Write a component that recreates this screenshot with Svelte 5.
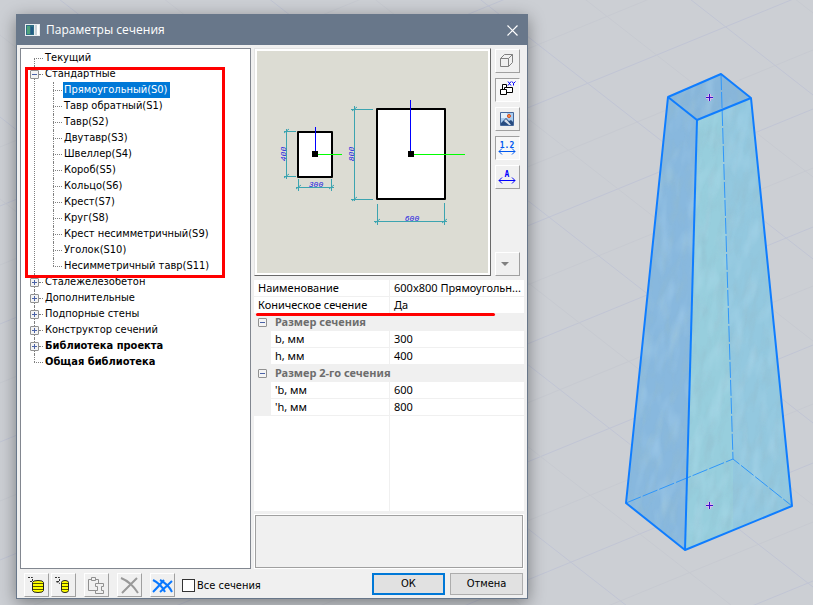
<script>
    let selected = "Прямоугольный(S0)";
    let allSections = false;

    const tree = [
        { label: "Текущий" },
        {
            label: "Стандартные",
            open: true,
            marked: true,
            children: [
                "Прямоугольный(S0)",
                "Тавр обратный(S1)",
                "Тавр(S2)",
                "Двутавр(S3)",
                "Швеллер(S4)",
                "Короб(S5)",
                "Кольцо(S6)",
                "Крест(S7)",
                "Круг(S8)",
                "Крест несимметричный(S9)",
                "Уголок(S10)",
                "Несимметричный тавр(S11)",
            ],
        },
        { label: "Сталежелезобетон", children: [] },
        { label: "Дополнительные", children: [] },
        { label: "Подпорные стены", children: [] },
        { label: "Конструктор сечений", children: [] },
        { label: "Библиотека проекта", children: [], bold: true },
        { label: "Общая библиотека", bold: true },
    ];

    const mainProps = [
        { name: "Наименование", value: "600x800 Прямоугольн..." },
        { name: "Коническое сечение", value: "Да", marked: true },
    ];

    const groups = [
        {
            title: "Размер сечения",
            rows: [
                { name: "b, мм", value: "300" },
                { name: "h, мм", value: "400" },
            ],
        },
        {
            title: "Размер 2-го сечения",
            rows: [
                { name: "'b, мм", value: "600" },
                { name: "'h, мм", value: "800" },
            ],
        },
    ];

    // floor grid: two families of parallel lines, every second one fainter
    const rising = Array.from({ length: 17 }, (_, i) => ({ y: -103 + 59 * i, faint: i % 2 === 0 }));
    const falling = Array.from({ length: 17 }, (_, i) => ({ y: -637 + 82 * i, faint: i % 2 === 0 }));
</script>

<main class="desktop">
    <svg class="scene" viewBox="0 0 813 605" preserveAspectRatio="xMaxYMid slice" aria-hidden="true">
        <defs>
            <filter id="grain" x="0" y="0" width="100%" height="100%">
                <feTurbulence type="fractalNoise" baseFrequency="0.12 0.04" numOctaves="3" seed="4" />
                <feColorMatrix values="0 0 0 0 0.3  0 0 0 0 0.5  0 0 0 0 0.6  1.8 0 0 0 -0.8" />
            </filter>
            <filter id="glow" x="0" y="0" width="100%" height="100%">
                <feTurbulence type="fractalNoise" baseFrequency="0.08 0.03" numOctaves="2" seed="9" />
                <feColorMatrix values="0 0 0 0 0.6  0 0 0 0 0.85  0 0 0 0 1  1.8 0 0 0 -0.8" />
            </filter>
            <clipPath id="solid">
                <path d="M721 74 751 98 792 506 685 550 626 503 668 97Z" />
            </clipPath>
        </defs>

        <g class="floor">
            {#each rising as line}
                <line class:faint={line.faint} x1="0" y1={line.y + 250} x2="813" y2={line.y - 83} />
            {/each}
            {#each falling as line}
                <line class:faint={line.faint} x1="0" y1={line.y - 476} x2="813" y2={line.y + 158} />
            {/each}
        </g>

        <path fill="#88b8de" d="M668 97 697 120 685 550 626 503Z" />
        <path fill="#97cedd" d="M697 120 722 110 733 459 733 530 685 550Z" />
        <path fill="#93c8df" d="M722 110 751 98 792 506 733 530 733 459Z" />
        <path fill="#88b6da" d="M668 97 721 74 751 98 697 120Z" />
        <g clip-path="url(#solid)">
            <g transform="rotate(8 700 300)">
                <rect x="580" y="40" width="250" height="540" filter="url(#grain)" opacity="0.5" />
                <rect x="580" y="40" width="250" height="540" filter="url(#glow)" opacity="0.3" />
            </g>
        </g>
        <g class="hidden-edges">
            <path d="M721 74 733 459" />
            <path d="M626 503 733 459 792 506" />
        </g>
        <g class="edges">
            <path d="M668 97 721 74 751 98 697 120Z" />
            <path d="M668 97 626 503 685 550 792 506 751 98" />
            <path d="M697 120 685 550" />
        </g>
        <path class="mark-halo" d="M709.500 94v7M706 97.500h7M709.500 502v7M706 505.500h7" />
        <path class="mark" d="M709.500 94v7M706 97.500h7M709.500 502v7M706 505.500h7" />
    </svg>

    <div class="dialog" role="dialog" aria-labelledby="dialog-title">
        <header>
            <svg width="15" height="12" viewBox="0 0 15 12" aria-hidden="true">
                <path fill="#e9eef2" d="M0 0h15v12H0z" />
                <path fill="#2f6f86" d="M1 1h8v10H1z" />
                <path fill="#4fa27c" d="M2 2h3v8H2z" />
                <path fill="#235a86" d="M6 3h2v7H6z" />
                <path fill="#c9d3da" d="M10 1h2v10h-2z" />
                <path fill="#fff" d="M12 1h2v10h-2z" />
            </svg>
            <h1 id="dialog-title">Параметры сечения</h1>
            <button class="close" aria-label="Закрыть">
                <svg width="11" height="11" viewBox="0 0 11 11"><path d="M.5.5l10 10M10.500.5l-10 10" stroke="#fff" stroke-width="1.2" /></svg>
            </button>
        </header>

        <div class="columns">
            <nav class="tree">
                <ul>
                    {#each tree as node}
                        <li>
                            <div class="node" class:bold={node.bold}>
                                {#if node.children}
                                    <button class="toggle" class:open={node.open} aria-label={node.label}></button>
                                {/if}
                                <span class="dash"></span>
                                <span class="label">{node.label}</span>
                            </div>
                            {#if node.open}
                                <ul>
                                    {#each node.children as child}
                                        <li>
                                            <div class="node">
                                                <span class="dash"></span>
                                                <button
                                                    class="label"
                                                    class:selected={selected === child}
                                                    on:click={() => (selected = child)}
                                                >{child}</button>
                                            </div>
                                        </li>
                                    {/each}
                                </ul>
                            {/if}
                            {#if node.marked}
                                <span class="frame"></span>
                            {/if}
                        </li>
                    {/each}
                </ul>
            </nav>

            <div class="side">
                <div class="top">
                    <div class="preview">
                        <svg viewBox="257 51 231 222" role="img" aria-label="Эскиз сечения">
                            <g fill="none" stroke="#3ca4b0">
                                <path d="M286.500 129v50M284 131.500h12M284 176.500h12M284 133l5-4M284 178l5-4" />
                                <path d="M296 187.500h38M298.500 179v12M331.500 179v12M296 189l5-4M329 189l5-4" />
                                <path d="M354.500 106v95M351 109.500h22M351 199.500h22M352 111l5-4M352 201l5-4" />
                                <path d="M374 221.500h73M377.500 204v21M444.500 203v22M375 223l5-4M442 223l5-4" />
                            </g>
                            <g fill="#fff" stroke="#000" stroke-width="2" stroke-linejoin="round">
                                <path d="M298 132h34v45h-34z" />
                                <path d="M377 109h68v90h-68z" />
                            </g>
                            <path d="M315.500 127v27M410.500 100v54" stroke="#00f" />
                            <path d="M318 154.500h24M414 154.500h51" stroke="#0f0" />
                            <path d="M312 151h6v6h-6zM408 151h6v6h-6z" />
                            <g class="dims">
                                <text x="316" y="187">300</text>
                                <text x="412" y="221">600</text>
                                <text transform="translate(286 154) rotate(-90)">400</text>
                                <text transform="translate(354 154) rotate(-90)">800</text>
                            </g>
                        </svg>
                    </div>
                    <div class="tools">
                        <button class="tool" aria-label="Объёмный вид">
                            <svg viewBox="0 0 25 24" fill="none" stroke="#808080">
                                <path d="M5.500 9.500h8v8h-8zM5.500 9.500l4-4h8v8l-4 4M13.500 9.500l4-4" />
                            </svg>
                        </button>
                        <button class="tool pressed" aria-label="Оси">
                            <svg viewBox="0 0 25 24" fill="#fff" stroke="#000">
                                <path d="M7.500 6.500h4v6h-4z" />
                                <path d="M9.500 9.500h8v5h-8z" />
                                <path d="M5.500 11.500h6v5h-6z" />
                                <path fill="none" stroke="#00f" d="M13 3.500l3 4M16 3.500l-3 4M17 3.500l1.500 2 2-2M18.500 5.500v2" />
                            </svg>
                        </button>
                        <button class="tool" aria-label="Рисунок">
                            <svg viewBox="0 0 25 24">
                                <path fill="#a9cdf0" stroke="#45689c" d="M5.500 5.500h13v13h-13z" />
                                <path fill="#e3f0fa" d="M6 6h6v5H6z" />
                                <path fill="#274b80" d="M6 16l5-5 3 3 2-1 2 2v3H6z" />
                                <path fill="#d5deea" d="M9 14l2-2 5 6h-2z" />
                                <circle cx="14" cy="9" r="1.500" fill="#f6a04c" stroke="#d9481c" />
                            </svg>
                        </button>
                        <button class="tool pressed" aria-label="Размеры">
                            <svg viewBox="0 0 25 24" fill="none" stroke="#0058f0">
                                <path d="M4 15.500h16M7 12.500l-3 3 3 3M17 12.500l3 3-3 3" />
                                <text x="12" y="12" fill="#0058f0">1.2</text>
                            </svg>
                        </button>
                        <button class="tool" aria-label="Обозначения">
                            <svg viewBox="0 0 25 24" fill="none" stroke="#00f">
                                <path d="M4 15.500h16M7 12.500l-3 3 3 3M17 12.500l3 3-3 3" />
                                <text x="12" y="12" fill="#00f">A</text>
                            </svg>
                        </button>
                        <button class="tool more" aria-label="Ещё">
                            <svg viewBox="0 0 25 24"><path fill="#808080" d="M6 10h8l-4 4z" /></svg>
                        </button>
                    </div>
                </div>

                <div class="props">
                    <table>
                        <colgroup>
                            <col class="gutter-col" />
                            <col />
                            <col class="value-col" />
                        </colgroup>
                        <tbody>
                            {#each mainProps as prop}
                                <tr>
                                    <th scope="row" colspan="2">
                                        {prop.name}
                                        {#if prop.marked}<span class="underline"></span>{/if}
                                    </th>
                                    <td>{prop.value}</td>
                                </tr>
                            {/each}
                            {#each groups as group}
                                <tr class="group">
                                    <td class="gutter"><button class="toggle open" aria-label={group.title}></button></td>
                                    <th colspan="2">{group.title}</th>
                                </tr>
                                {#each group.rows as row}
                                    <tr>
                                        <td class="gutter"></td>
                                        <th scope="row">{row.name}</th>
                                        <td>{row.value}</td>
                                    </tr>
                                {/each}
                            {/each}
                        </tbody>
                    </table>
                </div>
                <div class="hint"></div>
            </div>
        </div>

        <footer>
            <button class="tool" aria-label="Добавить в библиотеку">
                <svg viewBox="0 0 25 24">
                    <path fill="#ff0" stroke="#222" d="M8.500 9.500q0-2 5.500-2t5.500 2v8q0 2-5.500 2t-5.500-2z" />
                    <path fill="none" stroke="#555500" d="M9 10.500h10M9 13.500h10M9 16.500h10" />
                    <path fill="none" stroke="#333" stroke-dasharray="2 1" d="M4 4.500h4.500v4H5" />
                </svg>
            </button>
            <button class="tool" aria-label="Взять из библиотеки">
                <svg viewBox="0 0 25 24">
                    <path fill="#ff0" stroke="#222" d="M10.500 9.500q0-2 3.500-2t3.500 2v8q0 2-3.500 2t-3.500-2z" />
                    <path fill="none" stroke="#555500" d="M11 10.500h6M11 13.500h6M11 16.500h6" />
                    <path fill="none" stroke="#333" stroke-dasharray="2 1" d="M4 4.500h4.500v4H5l4 2" />
                </svg>
            </button>
            <button class="tool gap" aria-label="Вставить">
                <svg viewBox="0 0 25 24" fill="#f0f0f0" stroke="#909090">
                    <path d="M4.500 6.500h10v11h-10z" />
                    <path d="M7.500 4.500h4v3h-4z" />
                    <path d="M11.500 10.500h8v3h-2v4h2v3h-8v-3h2v-4h-2z" />
                </svg>
            </button>
            <button class="tool gap" aria-label="Удалить">
                <svg viewBox="0 0 25 24" fill="none" stroke="#999" stroke-width="2">
                    <path d="M4 5q10 4 17 15M20 5q-6 6-15 15" />
                </svg>
            </button>
            <button class="tool gap" aria-label="Удалить все">
                <svg viewBox="0 0 25 24" fill="none" stroke="#0a78ff" stroke-width="2">
                    <path d="M3 7q8 4 12 12M14 7q-5 6-11 12M10 7q8 4 12 12M22 8q-5 5-12 11" />
                </svg>
            </button>
            <label class="check">
                <input type="checkbox" bind:checked={allSections} />
                Все сечения
            </label>
            <button class="action primary">ОК</button>
            <button class="action">Отмена</button>
        </footer>
    </div>
</main>

<style>
    :global(body) {
        margin: 0;
    }

    .desktop {
        position: relative;
        display: flex;
        box-sizing: border-box;
        min-height: 100vh;
        padding: 14px 285px 6px 16px;
        overflow: hidden;
        background: #cccfd4;
        color: #000;
        font: 11px/16px "Noto Sans", "Open Sans", sans-serif;
    }

    button {
        padding: 0;
        font: inherit;
        color: inherit;
    }

    /* 3D view */
    .scene {
        position: absolute;
        inset: 0;
        width: 100%;
        height: 100%;
    }

    .floor line {
        stroke: #c1c5d4;
    }

    .floor .faint {
        stroke: #c7cad1;
    }

    .edges,
    .hidden-edges {
        fill: none;
        stroke: #0f7dff;
        stroke-width: 2;
        stroke-linejoin: round;
    }

    .hidden-edges {
        stroke: #2e96fb;
        stroke-width: 1;
        stroke-dasharray: 16 2;
    }

    .mark-halo {
        stroke: #d9b8ee;
        stroke-width: 3;
    }

    .mark {
        stroke: #3a10c8;
    }

    /* dialog */
    .dialog {
        position: relative;
        display: flex;
        flex: 1;
        flex-direction: column;
        min-width: 0;
        box-sizing: border-box;
        border: 1px solid #68778a;
        background: #f0f0f0;
        box-shadow: 0 4px 16px rgba(0, 0, 0, 0.4);
    }

    header {
        display: flex;
        align-items: center;
        height: 30px;
        padding: 0 9px 0 8px;
        background: #68778a;
        color: #fff;
    }

    h1 {
        flex: 1;
        margin: 0 6px;
        font-family: "Open Sans", "Noto Sans", sans-serif;
        font-size: 12px;
        font-weight: normal;
    }

    .close {
        display: flex;
        border: 0;
        background: none;
    }

    .columns {
        display: grid;
        flex: 1;
        grid-template-columns: 231fr 270fr;
        gap: 3px;
        padding: 3px 3px 0;
    }

    /* tree */
    .tree {
        border: 1px solid #828790;
        background: #fff;
        padding: 1px 0 0 9px;
        font-family: "DejaVu Sans Condensed", "DejaVu Sans", sans-serif;
    }

    ul {
        margin: 0;
        padding: 0;
        list-style: none;
    }

    ul ul {
        padding-left: 19px;
    }

    li {
        position: relative;
    }

    li::before {
        content: "";
        position: absolute;
        top: 0;
        bottom: 0;
        left: 4px;
        border-left: 1px dotted #808080;
    }

    .tree > ul > li:first-child::before {
        top: 8px;
    }

    li:last-child::before {
        bottom: 8px;
    }

    .node {
        position: relative;
        display: flex;
        align-items: center;
        height: 16px;
    }

    .dash {
        width: 9px;
        margin: 0 1px 0 4px;
        border-top: 1px dotted #808080;
    }

    .toggle + .dash {
        width: 4px;
        margin-left: 0;
    }

    .toggle {
        width: 9px;
        height: 9px;
        box-sizing: border-box;
        border: 1px solid #919191;
        border-radius: 1px;
        background:
            linear-gradient(#4b63a7, #4b63a7) center / 5px 1px no-repeat,
            linear-gradient(#4b63a7, #4b63a7) center / 1px 5px no-repeat,
            #f4f4f4;
    }

    .toggle.open {
        background: linear-gradient(#4b63a7, #4b63a7) center / 5px 1px no-repeat, #f4f4f4;
    }

    .label {
        height: 16px;
        padding: 0 2px 0 1px;
        border: 0;
        background: none;
        line-height: 16px;
        white-space: nowrap;
    }

    .label.selected {
        background: #0078d7;
        color: #fff;
    }

    .bold {
        font-weight: bold;
    }

    .frame {
        position: absolute;
        top: 1px;
        bottom: -4px;
        left: -5px;
        width: 200px;
        box-sizing: border-box;
        border: 3px solid #f00;
        z-index: 1;
        pointer-events: none;
    }

    /* right side */
    .side {
        display: flex;
        flex-direction: column;
        min-width: 0;
    }

    .top {
        display: flex;
        gap: 4px;
        height: 228px;
        margin-bottom: 4px;
        padding-right: 4px;
    }

    .preview {
        flex: 1;
        box-sizing: border-box;
        border: 1px solid;
        border-color: #e3e3e3 #696969 #696969 #e3e3e3;
        background: #dcdcd3;
        box-shadow: inset 0 0 0 2px #fff;
    }

    .preview svg {
        display: block;
        width: 100%;
        height: 100%;
        box-sizing: border-box;
        padding: 2px;
    }

    .dims text {
        fill: #1616e0;
        font: italic 8px "Liberation Mono", monospace;
        text-anchor: middle;
    }

    .tools {
        display: flex;
        flex-direction: column;
        gap: 5px;
        padding-top: 1px;
    }

    .tool {
        flex: none;
        width: 25px;
        height: 24px;
        box-sizing: border-box;
        border: 1px solid;
        border-color: #fff #a0a0a0 #a0a0a0 #fff;
        background: #f0f0f0;
    }

    .tool.pressed {
        border-color: #a0a0a0 #fff #fff #a0a0a0;
        background: #f7f7f7;
    }

    .tool svg {
        display: block;
        width: 25px;
        height: 24px;
        margin: -1px;
    }

    .tool text {
        font: bold 8px "DejaVu Sans Mono", monospace;
        text-anchor: middle;
        stroke: none;
    }

    .more {
        margin-top: auto;
    }

    .props {
        flex: 1;
        background: linear-gradient(#f0f0f0, #f0f0f0) 50% 0 / 1px 100% no-repeat, #fff;
    }

    table {
        width: 100%;
        table-layout: fixed;
        border-spacing: 0;
    }

    .gutter-col {
        width: 17px;
    }

    .value-col {
        width: 50%;
    }

    tr {
        height: 17px;
    }

    th,
    td {
        position: relative;
        padding: 0 4px;
        border-bottom: 1px solid #f0f0f0;
        font-weight: normal;
        text-align: left;
        white-space: nowrap;
        line-height: 16px;
    }

    td {
        padding: 0 0 0 5px;
    }

    .group th {
        background: #f0f0f0;
        color: #6d6d6d;
        font-weight: bold;
    }

    .gutter {
        padding: 0 4px;
        background: #f0f0f0;
    }

    .gutter .toggle {
        display: block;
    }

    .underline {
        position: absolute;
        left: 2px;
        bottom: -3px;
        width: 239px;
        height: 3px;
        border-radius: 2px;
        background: #f00;
        z-index: 1;
    }

    .hint {
        height: 51px;
        margin: 4px 1px 1px;
        border: 1px solid #a0a0a0;
        outline: 1px solid #fff;
    }

    footer {
        display: flex;
        align-items: flex-start;
        gap: 2px;
        padding: 4px 4px 0 7px;
    }

    .gap {
        margin-left: 6px;
    }

    .check {
        display: flex;
        flex: 1;
        align-items: center;
        gap: 2px;
        height: 25px;
        margin-left: 5px;
        font-family: "DejaVu Sans Condensed", "DejaVu Sans", sans-serif;
        white-space: nowrap;
    }

    .check input {
        appearance: none;
        width: 13px;
        height: 13px;
        margin: 0;
        border: 1px solid #333;
        background: #fff;
    }

    .check input:checked {
        background: #0078d7;
    }

    .action {
        width: 73px;
        height: 22px;
        box-sizing: border-box;
        border: 1px solid #adadad;
        background: #e1e1e1;
        font-family: "DejaVu Sans Condensed", "DejaVu Sans", sans-serif;
    }

    .primary {
        margin-right: 3px;
        border: 2px solid #0078d7;
    }
</style>
